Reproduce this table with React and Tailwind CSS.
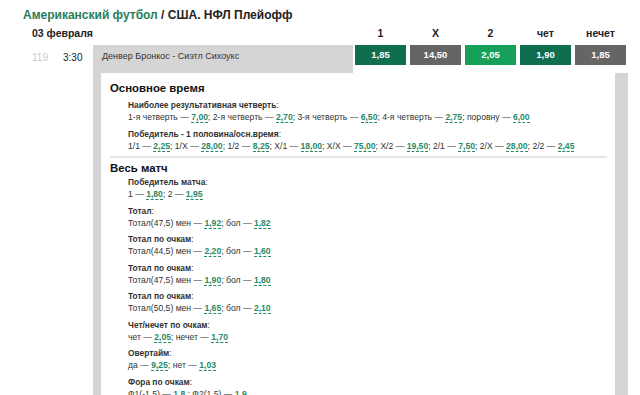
import React from 'react'

const odds = [
  { h: '1', v: '1,85', c: 'bg-[#0e6e4e]' },
  { h: 'X', v: '14,50', c: 'bg-[#656565]' },
  { h: '2', v: '2,05', c: 'bg-[#17a05a]' },
  { h: 'чет', v: '1,90', c: 'bg-[#0e6e4e]' },
  { h: 'нечет', v: '1,85', c: 'bg-[#656565]' },
]

const main = [
  {
    t: 'Наиболее результативная четверть',
    items: [['1-я четверть', '7,00'], ['2-я четверть', '2,70'], ['3-я четверть', '6,50'], ['4-я четверть', '2,75'], ['поровну', '6,00']],
  },
  {
    t: 'Победитель - 1 половина/осн.время',
    items: [['1/1', '2,25'], ['1/X', '28,00'], ['1/2', '8,25'], ['X/1', '18,00'], ['X/X', '75,00'], ['X/2', '19,50'], ['2/1', '7,50'], ['2/X', '28,00'], ['2/2', '2,45']],
  },
]

const full = [
  { t: 'Победитель матча', items: [['1', '1,80'], ['2', '1,95']] },
  { t: 'Тотал', items: [['Тотал(47,5) мен', '1,92'], ['бол', '1,82']] },
  { t: 'Тотал по очкам', items: [['Тотал(44,5) мен', '2,20'], ['бол', '1,60']] },
  { t: 'Тотал по очкам', items: [['Тотал(47,5) мен', '1,90'], ['бол', '1,80']] },
  { t: 'Тотал по очкам', items: [['Тотал(50,5) мен', '1,65'], ['бол', '2,10']] },
  { t: 'Чет/нечет по очкам', items: [['чет', '2,05'], ['нечет', '1,70']] },
  { t: 'Овертайм', items: [['да', '9,25'], ['нет', '1,03']] },
  { t: 'Фора по очкам', items: [['Ф1(-1,5)', '1,8 '], ['Ф2(1,5)', '1,9']] },
]

function Group({ g }) {
  return (
    <div className="mb-[3.5px] pl-[18px]">
      <div className="text-[8.4px] leading-[12px] font-bold text-[#333]">
        {g.t}<span className="font-normal">:</span>
      </div>
      <div className="text-[8.6px] leading-[13px] text-[#333] whitespace-pre">
        {g.items.map(([k, v], i) => (
          <span key={i}>
            {k} — <span className="font-bold text-[#2a8a68] border-b border-dashed border-[#2a8a68]">{v}</span>
            {i < g.items.length - 1 ? '; ' : ''}
          </span>
        ))}
      </div>
    </div>
  )
}

export default function App() {
  return (
    <div className="w-[640px] h-[395px] overflow-hidden bg-white text-[#222] font-['Liberation_Sans',Arial,sans-serif]">
      <div className="pl-[23px] pt-[6px] text-[12px] leading-[18px] font-bold">
        <span className="text-[#2a7d5c]">Американский футбол</span> / США. НФЛ Плейофф
      </div>
      <div className="flex items-center mt-[3px] h-[14px]">
        <div className="w-[355px] pl-[32px] text-[10.5px] font-bold">03 февраля</div>
        <div className="flex gap-[4px]">
          {odds.map((o) => (
            <div key={o.h + o.v} className="w-[51px] text-center text-[10.5px] font-bold">{o.h}</div>
          ))}
        </div>
      </div>
      <div className="flex mt-[4px]">
        <div className="w-[93px] flex pt-[6px] text-[10px] leading-[13px]">
          <span className="pl-[32px] w-[63px] text-[#c8c8c8]">119</span>
          <span>3:30</span>
        </div>
        <div className="w-[535px] bg-[#d5d5d5]">
          <div className="flex h-[28px]">
            <div className="w-[260px] pl-[9px] pt-[5px] text-[9px] leading-[13px] text-[#333]">
              Денвер Бронкос - Сиэтл Сихоукс
            </div>
            <div className="flex-1 flex gap-[4px] pl-[2px] bg-white">
              {odds.map((o) => (
                <div key={o.h} className={`w-[51px] h-[20px] flex items-center justify-center text-white text-[9.5px] font-bold ${o.c}`}>
                  {o.v}
                </div>
              ))}
            </div>
          </div>
          <div className="pl-[8px] pr-[13px]">
            <div className="bg-white h-[330px] pl-[9px] pr-[8px] pt-[7px]">
              <div className="text-[11.4px] leading-[16px] font-bold text-[#111] mb-[3px]">Основное время</div>
              {main.map((g, i) => <Group key={i} g={g} />)}
              <div className="h-[2px] bg-[#e6e6e6] mt-[1px] mb-[2px]" />
              <div className="text-[11.4px] leading-[16px] font-bold text-[#111]">Весь матч</div>
              {full.map((g, i) => <Group key={i} g={g} />)}
            </div>
          </div>
        </div>
      </div>
    </div>
  )
}
